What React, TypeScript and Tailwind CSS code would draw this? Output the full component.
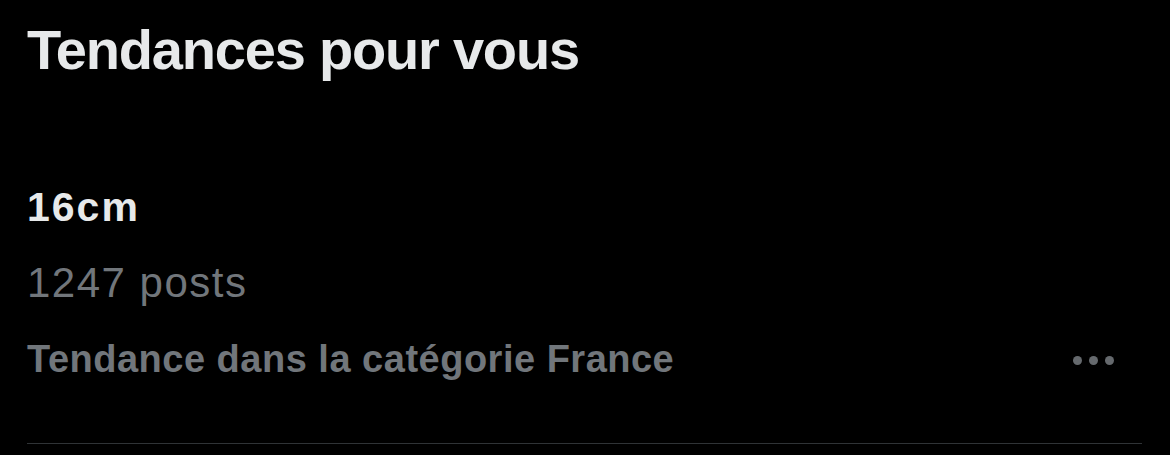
import React from "react";

export default function App() {
  return (
    <div
      className="w-[1170px] h-[455px] bg-black overflow-hidden"
      style={{ fontFamily: "'Liberation Sans', Arial, sans-serif" }}
    >
      <div className="pl-[27px] pr-[28px]">
        <h2 className="pt-[18px] text-[56px] leading-[64px] font-bold text-[#e7e9ea] tracking-[-1.2px]">
          Tendances pour vous
        </h2>
        <div className="mt-[101px] pb-[62px] border-b border-[#2f3336] flex flex-col">
          <div className="text-[41px] leading-[48px] font-bold text-[#e7e9ea] tracking-[2px]">
            16cm
          </div>
          <div className="mt-[28px] text-[42px] leading-[48px] font-normal text-[#71767b] tracking-[1.5px]">
            1247 posts
          </div>
          <div className="mt-[30px] flex items-center justify-between">
            <span className="text-[38px] leading-[44px] font-bold text-[#71767b] tracking-[0.5px]">
              Tendance dans la catégorie France
            </span>
            <div className="flex gap-[7px] mr-[28px] translate-y-[1px]">
              <span className="w-[9px] h-[9px] rounded-full bg-[#65696d]" />
              <span className="w-[9px] h-[9px] rounded-full bg-[#65696d]" />
              <span className="w-[9px] h-[9px] rounded-full bg-[#65696d]" />
            </div>
          </div>
        </div>
      </div>
    </div>
  );
}
